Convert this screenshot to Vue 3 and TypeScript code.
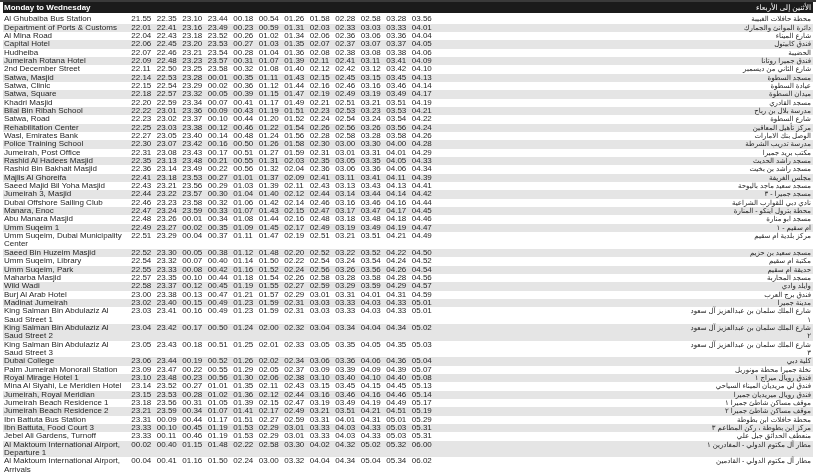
<script setup lang="ts">
interface Stop { en: string; t: string; ar: string }
const stops: Stop[] = [
  { en: 'Al Ghubaiba Bus Station', t: '21.55 22.35 23.10 23.44 00.18 00.54 01.26 01.58 02.28 02.58 03.28 03.56', ar: 'محطة حافلات الغبيبة' },
  { en: 'Department of Ports & Customs', t: '22.01 22.41 23.16 23.49 00.23 00.59 01.31 02.03 02.33 03.03 03.33 04.01', ar: 'دائرة الموانئ والجمارك' },
  { en: 'Al Mina Road', t: '22.04 22.43 23.18 23.52 00.26 01.02 01.34 02.06 02.36 03.06 03.36 04.04', ar: 'شارع الميناء' },
  { en: 'Capital Hotel', t: '22.06 22.45 23.20 23.53 00.27 01.03 01.35 02.07 02.37 03.07 03.37 04.05', ar: 'فندق كابيتول' },
  { en: 'Hudheiba', t: '22.07 22.46 23.21 23.54 00.28 01.04 01.36 02.08 02.38 03.08 03.38 04.06', ar: 'الحضيبة' },
  { en: 'Jumeirah Rotana Hotel', t: '22.09 22.48 23.23 23.57 00.31 01.07 01.39 02.11 02.41 03.11 03.41 04.09', ar: 'فندق جميرا روتانا' },
  { en: '2nd December Street', t: '22.11 22.50 23.25 23.58 00.32 01.08 01.40 02.12 02.42 03.12 03.42 04.10', ar: 'شارع الثاني من ديسمبر' },
  { en: 'Satwa, Masjid', t: '22.14 22.53 23.28 00.01 00.35 01.11 01.43 02.15 02.45 03.15 03.45 04.13', ar: 'مسجد السطوة' },
  { en: 'Satwa, Clinic', t: '22.15 22.54 23.29 00.02 00.36 01.12 01.44 02.16 02.46 03.16 03.46 04.14', ar: 'عيادة السطوة' },
  { en: 'Satwa, Square', t: '22.18 22.57 23.32 00.05 00.39 01.15 01.47 02.19 02.49 03.19 03.49 04.17', ar: 'ميدان السطوة' },
  { en: 'Khadri Masjid', t: '22.20 22.59 23.34 00.07 00.41 01.17 01.49 02.21 02.51 03.21 03.51 04.19', ar: 'مسجد القادري' },
  { en: 'Bilal Bin Ribah School', t: '22.22 23.01 23.36 00.09 00.43 01.19 01.51 02.23 02.53 03.23 03.53 04.21', ar: 'مدرسة بلال بن رباح' },
  { en: 'Satwa, Road', t: '22.23 23.02 23.37 00.10 00.44 01.20 01.52 02.24 02.54 03.24 03.54 04.22', ar: 'شارع السطوة' },
  { en: 'Rehabilitation Center', t: '22.25 23.03 23.38 00.12 00.46 01.22 01.54 02.26 02.56 03.26 03.56 04.24', ar: 'مركز تأهيل المعاقين' },
  { en: 'Wasl, Emirates Bank', t: '22.27 23.05 23.40 00.14 00.48 01.24 01.56 02.28 02.58 03.28 03.58 04.26', ar: 'الوصل بنك الامارات' },
  { en: 'Police Training School', t: '22.30 23.07 23.42 00.16 00.50 01.26 01.58 02.30 03.00 03.30 04.00 04.28', ar: 'مدرسة تدريب الشرطة' },
  { en: 'Jumeirah, Post Office', t: '22.31 23.08 23.43 00.17 00.51 01.27 01.59 02.31 03.01 03.31 04.01 04.29', ar: 'مكتب بريد جميرا' },
  { en: 'Rashid Al Hadees Masjid', t: '22.35 23.13 23.48 00.21 00.55 01.31 02.03 02.35 03.05 03.35 04.05 04.33', ar: 'مسجد راشد الحديث' },
  { en: 'Rashid Bin Bakhait Masjid', t: '22.36 23.14 23.49 00.22 00.56 01.32 02.04 02.36 03.06 03.36 04.06 04.34', ar: 'مسجد راشد بن بخيت' },
  { en: 'Majlis Al Ghoreifa', t: '22.41 23.18 23.53 00.27 01.01 01.37 02.09 02.41 03.11 03.41 04.11 04.39', ar: 'مجلس الغريفة' },
  { en: 'Saeed Majid Bil Yoha Masjid', t: '22.43 23.21 23.56 00.29 01.03 01.39 02.11 02.43 03.13 03.43 04.13 04.41', ar: 'مسجد سعيد ماجد باليوحة' },
  { en: 'Jumeirah 3, Masjid', t: '22.44 23.22 23.57 00.30 01.04 01.40 02.12 02.44 03.14 03.44 04.14 04.42', ar: 'مسجد جميرا - ٣' },
  { en: 'Dubai Offshore Sailing Club', t: '22.46 23.23 23.58 00.32 01.06 01.42 02.14 02.46 03.16 03.46 04.16 04.44', ar: 'نادي دبي للقوارب الشراعية' },
  { en: 'Manara, Enoc', t: '22.47 23.24 23.59 00.33 01.07 01.43 02.15 02.47 03.17 03.47 04.17 04.45', ar: 'محطة بترول اينكو - المنارة' },
  { en: 'Abu Manara Masjid', t: '22.48 23.26 00.01 00.34 01.08 01.44 02.16 02.48 03.18 03.48 04.18 04.46', ar: 'مسجد ابو منارة' },
  { en: 'Umm Suqeim 1', t: '22.49 23.27 00.02 00.35 01.09 01.45 02.17 02.49 03.19 03.49 04.19 04.47', ar: 'ام سقيم - ١' },
  { en: 'Umm Suqeim, Dubai Municipality Center', t: '22.51 23.29 00.04 00.37 01.11 01.47 02.19 02.51 03.21 03.51 04.21 04.49', ar: 'مركز بلدية ام سقيم' },
  { en: 'Saeed Bin Huzeim Masjid', t: '22.52 23.30 00.05 00.38 01.12 01.48 02.20 02.52 03.22 03.52 04.22 04.50', ar: 'مسجد سعيد بن حزيم' },
  { en: 'Umm Suqeim, Library', t: '22.54 23.32 00.07 00.40 01.14 01.50 02.22 02.54 03.24 03.54 04.24 04.52', ar: 'مكتبة ام سقيم' },
  { en: 'Umm Suqeim, Park', t: '22.55 23.33 00.08 00.42 01.16 01.52 02.24 02.56 03.26 03.56 04.26 04.54', ar: 'حديقة ام سقيم' },
  { en: 'Maharba Masjid', t: '22.57 23.35 00.10 00.44 01.18 01.54 02.26 02.58 03.28 03.58 04.28 04.56', ar: 'مسجد المحاربة' },
  { en: 'Wild Wadi', t: '22.58 23.37 00.12 00.45 01.19 01.55 02.27 02.59 03.29 03.59 04.29 04.57', ar: 'وايلد وادي' },
  { en: 'Burj Al Arab Hotel', t: '23.00 23.38 00.13 00.47 01.21 01.57 02.29 03.01 03.31 04.01 04.31 04.59', ar: 'فندق برج العرب' },
  { en: 'Madinat Jumeirah', t: '23.02 23.40 00.15 00.49 01.23 01.59 02.31 03.03 03.33 04.03 04.33 05.01', ar: 'مدينة جميرا' },
  { en: 'King Salman Bin Abdulaziz Al Saud Street 1', t: '23.03 23.41 00.16 00.49 01.23 01.59 02.31 03.03 03.33 04.03 04.33 05.01', ar: 'شارع الملك سلمان بن عبدالعزيز آل سعود ١' },
  { en: 'King Salman Bin Abdulaziz Al Saud Street 2', t: '23.04 23.42 00.17 00.50 01.24 02.00 02.32 03.04 03.34 04.04 04.34 05.02', ar: 'شارع الملك سلمان بن عبدالعزيز آل سعود ٢' },
  { en: 'King Salman Bin Abdulaziz Al Saud Street 3', t: '23.05 23.43 00.18 00.51 01.25 02.01 02.33 03.05 03.35 04.05 04.35 05.03', ar: 'شارع الملك سلمان بن عبدالعزيز آل سعود ٣' },
  { en: 'Dubai College', t: '23.06 23.44 00.19 00.52 01.26 02.02 02.34 03.06 03.36 04.06 04.36 05.04', ar: 'كلية دبي' },
  { en: 'Palm Jumeirah Monorail Station', t: '23.09 23.47 00.22 00.55 01.29 02.05 02.37 03.09 03.39 04.09 04.39 05.07', ar: 'نخلة جميرا محطة مونوريل' },
  { en: 'Royal Mirage Hotel 1', t: '23.10 23.48 00.23 00.56 01.30 02.06 02.38 03.10 03.40 04.10 04.40 05.08', ar: 'فندق رويال ميراج ١' },
  { en: 'Mina Al Siyahi, Le Meridien Hotel', t: '23.14 23.52 00.27 01.01 01.35 02.11 02.43 03.15 03.45 04.15 04.45 05.13', ar: 'فندق لي مريديان الميناء السياحي' },
  { en: 'Jumeirah, Royal Meridian', t: '23.15 23.53 00.28 01.02 01.36 02.12 02.44 03.16 03.46 04.16 04.46 05.14', ar: 'فندق رويال ميريديان جميرا' },
  { en: 'Jumeirah Beach Residence 1', t: '23.18 23.56 00.31 01.05 01.39 02.15 02.47 03.19 03.49 04.19 04.49 05.17', ar: 'موقف مساكن شاطئ جميرا ١' },
  { en: 'Jumeirah Beach Residence 2', t: '23.21 23.59 00.34 01.07 01.41 02.17 02.49 03.21 03.51 04.21 04.51 05.19', ar: 'موقف مساكن شاطئ جميرا ٢' },
  { en: 'Ibn Battuta Bus Station', t: '23.31 00.09 00.44 01.17 01.51 02.27 02.59 03.31 04.01 04.31 05.01 05.29', ar: 'محطة حافلات ابن بطوطة' },
  { en: 'Ibn Battuta, Food Court 3', t: '23.33 00.10 00.45 01.19 01.53 02.29 03.01 03.33 04.03 04.33 05.03 05.31', ar: 'مركز ابن بطوطة ، ركن المطاعم ٣' },
  { en: 'Jebel Ali Gardens, Turnoff', t: '23.33 00.11 00.46 01.19 01.53 02.29 03.01 03.33 04.03 04.33 05.03 05.31', ar: 'منعطف الحدائق جبل علي' },
  { en: 'Al Maktoum International Airport, Departure 1', t: '00.02 00.40 01.15 01.48 02.22 02.58 03.30 04.02 04.32 05.02 05.32 06.00', ar: 'مطار آل مكتوم الدولي - المغادرين ١' },
  { en: 'Al Maktoum International Airport, Arrivals', t: '00.04 00.41 01.16 01.50 02.24 03.00 03.32 04.04 04.34 05.04 05.34 06.02', ar: 'مطار آل مكتوم الدولي - القادمين' }
]
const rows = stops.map(s => ({ ...s, times: s.t.split(' ') }))
</script>

<template>
  <div class="page">
    <header class="head">
      <span class="head-en">Monday to Wednesday</span>
      <span class="head-ar" dir="rtl" lang="ar">الأثنين إلى الأربعاء</span>
    </header>
    <div class="list">
      <div v-for="r in rows" :key="r.en" class="row">
        <div class="name">{{ r.en }}</div>
        <div class="times">
          <span v-for="(x, i) in r.times" :key="i" class="time">{{ x }}</span>
        </div>
        <div class="ar" dir="rtl" lang="ar">{{ r.ar }}</div>
      </div>
    </div>
  </div>
</template>

<style>
html, body { background: #fff; margin: 0; }
</style>

<style scoped>
.page {
  width: 816px;
  height: 475px;
  overflow: hidden;
  box-sizing: border-box;
  padding-left: 3px;
  padding-right: 3px;
  border-top: 2px solid #3a3a3a;
  font-family: "Liberation Sans", Arial, sans-serif;
  color: #262626;
  filter: blur(0.25px);
}
.head {
  height: 11px;
  background: #1b1b1b;
  color: #fff;
  display: flex;
  justify-content: space-between;
  align-items: center;
  padding: 0 2px 0 1px;
  font-size: 8px;
  font-weight: 700;
  margin-bottom: 2.2px;
}
.head-ar {
  font-family: "Liberation Sans", "DejaVu Sans", sans-serif;
  font-weight: 400;
  font-size: 7.5px;
}
.row {
  display: grid;
  grid-template-columns: 128.3px 306px 1fr;
  font-size: 8px;
  line-height: 8.34px;
}
.row:nth-child(even) { background: #e5e5e5; }
.name { padding-left: 1px; padding-right: 4px; }
.times { display: grid; grid-template-columns: repeat(12, 25.5px); }
.ar {
  padding-right: 2px;
  padding-left: 252px;
  font-family: "Liberation Sans", "DejaVu Sans", sans-serif;
  font-size: 7px;
  text-align: right;
}
</style>
